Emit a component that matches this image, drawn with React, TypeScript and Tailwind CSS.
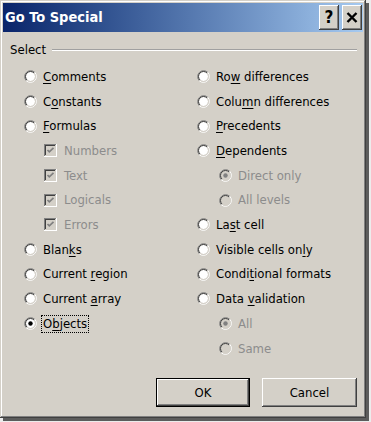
import React from "react";

const FONT = "font-['DejaVu_Sans_Condensed','DejaVu_Sans',sans-serif] font-stretch-condensed";

function Radio({ checked = false, disabled = false }: { checked?: boolean; disabled?: boolean }) {
  return (
    <svg width="13" height="13" viewBox="0 0 13 13" className="shrink-0">
      <circle cx="6.5" cy="6.5" r="4.5" fill={disabled ? "#d4d0c8" : "#ffffff"} />
      <path d="M2.26 10.74 A6 6 0 0 1 10.74 2.26" stroke="#808080" strokeWidth="1" fill="none" />
      <path d="M10.74 2.26 A6 6 0 0 1 2.26 10.74" stroke="#ffffff" strokeWidth="1" fill="none" />
      <path d="M2.96 10.04 A5 5 0 0 1 10.04 2.96" stroke="#404040" strokeWidth="1" fill="none" />
      <path d="M10.04 2.96 A5 5 0 0 1 2.96 10.04" stroke="#d4d0c8" strokeWidth="1" fill="none" />
      {checked && <circle cx="6.5" cy="6.5" r="2.2" fill={disabled ? "#808080" : "#000000"} />}
    </svg>
  );
}

function Check() {
  return (
    <svg width="13" height="13" viewBox="0 0 13 13" className="shrink-0">
      <rect x="0" y="0" width="13" height="13" fill="#ffffff" />
      <rect x="0" y="0" width="12" height="12" fill="#808080" />
      <rect x="1" y="1" width="11" height="11" fill="#d4d0c8" />
      <rect x="1" y="1" width="10" height="10" fill="#404040" />
      <rect x="2" y="2" width="9" height="9" fill="#d4d0c8" />
      <path d="M3.5 6 L5.3 7.9 L9.5 3.8" stroke="#808080" strokeWidth="1.7" fill="none" />
    </svg>
  );
}

function L({ t, u }: { t: string; u: number }) {
  return (
    <>
      {t.slice(0, u)}
      <span className="underline underline-offset-2">{t[u]}</span>
      {t.slice(u + 1)}
    </>
  );
}

function RadioRow({
  label,
  u,
  checked,
  disabled,
  indent = 0,
  focus,
}: {
  label: string;
  u?: number;
  checked?: boolean;
  disabled?: boolean;
  indent?: number;
  focus?: boolean;
}) {
  return (
    <div className="flex h-[24.7px] items-center" style={{ paddingLeft: indent }}>
      <Radio checked={checked} disabled={disabled} />
      {focus ? (
        <span className="ml-[4px] flex h-[18px] items-center border border-dotted border-black px-[1px] text-black">
          {u !== undefined ? <L t={label} u={u} /> : label}
        </span>
      ) : (
        <span className={"ml-[6px] " + (disabled ? "text-[#8c8c8c]" : "text-black")}>
          {u !== undefined ? <L t={label} u={u} /> : label}
        </span>
      )}
    </div>
  );
}

function CheckRow({ label }: { label: string }) {
  return (
    <div className="flex h-[24.7px] items-center pl-[20px]">
      <Check />
      <span className="ml-[7px] text-[#8c8c8c]">{label}</span>
    </div>
  );
}

export default function App() {
  return (
    <div className={"h-[422px] w-[371px] bg-[#ececec] " + FONT}>
      <div className="flex h-[418px] w-[366px] flex-col bg-[#d4d0c8] p-[3px] shadow-[inset_-1px_-1px_0_#404040,inset_1px_1px_0_#d4d0c8,inset_-2px_-2px_0_#808080,inset_2px_2px_0_#ffffff,3px_3px_0_#5c5c5c]">
        {/* Title bar */}
        <div className="flex h-[29px] items-center bg-gradient-to-r from-[#0a246a] to-[#a6caf0] pl-[2px] pr-[1px]">
          <span className="flex-1 text-[14.5px] font-bold leading-none text-white">Go To Special</span>
          <div className="flex h-[25px] w-[20px] items-center justify-center bg-[#d4d0c8] shadow-[inset_-1px_-1px_0_#404040,inset_1px_1px_0_#ffffff,inset_-2px_-2px_0_#808080]">
            <span className="text-[17px] font-bold leading-none text-black">?</span>
          </div>
          <div className="ml-[3px] flex h-[25px] w-[20px] items-center justify-center bg-[#d4d0c8] shadow-[inset_-1px_-1px_0_#404040,inset_1px_1px_0_#ffffff,inset_-2px_-2px_0_#808080]">
            <svg width="12" height="11" viewBox="0 0 12 11">
              <path d="M1.5 1 L10.5 10 M10.5 1 L1.5 10" stroke="#000" strokeWidth="2.4" />
            </svg>
          </div>
        </div>

        {/* Select header */}
        <div className="mt-[9px] flex h-[18px] items-center pl-[7px] pr-[6px] text-[13px] text-black">
          <span>Select</span>
          <div className="ml-[6px] h-[2px] flex-1 border-t border-b border-t-[#a0a0a0] border-b-[#ffffff]" />
        </div>

        {/* Options */}
        <div className="mt-[5.4px] grid grid-cols-[173px_1fr] pl-[21px] text-[13px]">
          <div className="flex flex-col">
            <RadioRow label="Comments" u={0} />
            <RadioRow label="Constants" u={1} />
            <RadioRow label="Formulas" u={0} />
            <CheckRow label="Numbers" />
            <CheckRow label="Text" />
            <CheckRow label="Logicals" />
            <CheckRow label="Errors" />
            <RadioRow label="Blanks" u={4} />
            <RadioRow label="Current region" u={8} />
            <RadioRow label="Current array" u={8} />
            <RadioRow label="Objects" u={1} checked focus />
          </div>
          <div className="flex flex-col">
            <RadioRow label="Row differences" u={2} />
            <RadioRow label="Column differences" u={4} />
            <RadioRow label="Precedents" u={0} />
            <RadioRow label="Dependents" u={0} />
            <RadioRow label="Direct only" checked disabled indent={22} />
            <RadioRow label="All levels" disabled indent={22} />
            <RadioRow label="Last cell" u={2} />
            <RadioRow label="Visible cells only" u={16} />
            <RadioRow label="Conditional formats" u={5} />
            <RadioRow label="Data validation" u={5} />
            <RadioRow label="All" checked disabled indent={22} />
            <RadioRow label="Same" disabled indent={22} />
          </div>
        </div>

        {/* Buttons */}
        <div className="mt-[17.4px] flex justify-end gap-[12px] pr-[6px] text-[13px] text-black">
          <button className="flex h-[29px] w-[94px] items-center justify-center bg-[#d4d0c8] shadow-[inset_0_0_0_1px_#000000,inset_-2px_-2px_0_#404040,inset_2px_2px_0_#ffffff,inset_-3px_-3px_0_#808080]">
            OK
          </button>
          <button className="flex h-[29px] w-[95px] items-center justify-center bg-[#d4d0c8] shadow-[inset_-1px_-1px_0_#404040,inset_1px_1px_0_#ffffff,inset_-2px_-2px_0_#808080]">
            Cancel
          </button>
        </div>
      </div>
    </div>
  );
}
